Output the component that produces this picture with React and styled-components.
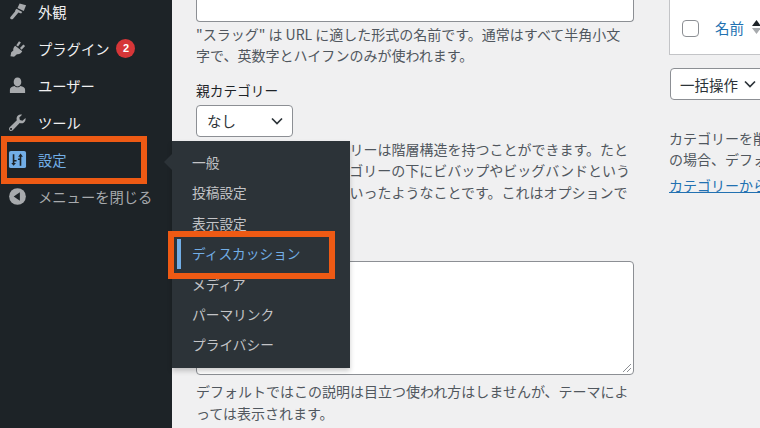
import React from "react";
import styled, { createGlobalStyle } from "styled-components";

const Global = createGlobalStyle`
  html, body { margin: 0; padding: 0; height: 100%; overflow: hidden; background: #f0f0f1; }
  * { box-sizing: border-box; }
`;
const Page = styled.div`
  width: 760px; height: 428px; overflow: hidden; position: relative;
  display: flex; background: #f0f0f1;
  font-family: "Noto Sans CJK JP", "Noto Sans", sans-serif; color: #50575e;
`;
const Sidebar = styled.nav`
  width: 172px; flex: none; background: #1d2327; overflow: hidden;
`;
const Menu = styled.ul`
  list-style: none; margin: -7px 0 0; padding: 0;
`;
const Item = styled.li`
  height: 37px; display: flex; align-items: center; padding-left: 8px; gap: 11px;
  font-size: 14.3px; color: ${p => p.$color || "#f0f0f1"};
`;
const IconBox = styled.span`
  width: 19px; height: 19px; flex: none; display: flex; color: ${p => p.$color || "#a7aaad"};
  svg { width: 100%; height: 100%; display: block; }
`;
const Badge = styled.span`
  width: 19px; height: 19px; border-radius: 50%; background: #d63638; color: #fff;
  font: 700 11px/19px "Liberation Sans", sans-serif; text-align: center; margin-left: -4px;
`;
const Main = styled.main`
  flex: 1; display: flex; min-width: 0; padding-left: 24px;
`;
const FormCol = styled.div`
  width: 438px; flex: none; display: flex; flex-direction: column;
`;
const TopInput = styled.div`
  height: 22px; flex: none; background: #fff; border: 1px solid #8c8f94; border-top: 0; border-radius: 0 0 4px 4px;
`;
const Help = styled.p`
  margin: ${p => p.$mt || 0}px 0 0; font-size: 14px; line-height: 21.4px; color: #50575e; white-space: nowrap;
`;
const Label = styled.div`
  margin-top: ${p => p.$mt}px; font-size: 13.7px; line-height: 21px; color: #1d2327;
`;
const SelectBox = styled.div`
  margin-top: ${p => p.$mt || 0}px; margin-left: ${p => p.$ml || 0}px; height: 32px; border: 1px solid #8c8f94; border-radius: 4px; background: #fff;
  display: flex; align-items: center; justify-content: space-between; color: #2c3338; font-size: 14.5px;
  width: ${p => p.$w}px; padding: 0 ${p => p.$pr}px 0 ${p => p.$pl}px; flex: none; white-space: nowrap;
`;
const Chevron = styled.svg`
  width: 14px; height: 14px; flex: none;
`;
const TextArea = styled.div`
  margin-top: 6px; height: 114px; flex: none; background: #fff; border: 1px solid #8c8f94; border-radius: 4px; position: relative;
`;
const Grip = styled.svg`
  position: absolute; right: 1px; bottom: 1px; width: 10px; height: 10px;
`;
const SideCol = styled.div`
  margin-left: 35px; flex: none; width: 200px; display: flex; flex-direction: column;
`;
const TableHead = styled.div`
  height: 55px; flex: none; background: #fff; border: 1px solid #c3c4c7; border-top: 0; border-right: 0;
  display: flex; align-items: center; padding: 0 0 0 12px; gap: 16px;
`;
const Check = styled.span`
  width: 17px; height: 17px; border: 1px solid #8c8f94; border-radius: 4px; background: #fff; flex: none; margin-top: 2px;
`;
const NameLink = styled.span`
  display: flex; align-items: center; gap: 8px; color: #2271b1; font-size: 14.5px;
`;
const Sort = styled.svg`
  width: 9px; height: 16px; flex: none;
`;
const Note = styled.p`
  margin: ${p => p.$mt || 0}px 0 0 0; font-size: 14px; line-height: 21.4px; white-space: nowrap; color: #50575e;
`;
const NoteLink = styled.a`
  color: #2271b1; text-decoration: underline;
`;
const Flyout = styled.ul`
  position: absolute; left: 172px; top: 141px; width: 178px; height: 227px; margin: 0; padding: 6px 0 0;
  list-style: none; background: #2c3338; box-shadow: 0 3px 5px rgba(0,0,0,.2);
  &::before {
    content: ""; position: absolute; left: -8px; top: 13px;
    border: 8px solid transparent; border-left: 0; border-right-color: #2c3338;
  }
`;
const FlyItem = styled.li`
  height: 30.4px; line-height: 30px; padding-left: 20px; font-size: 13.7px; position: relative;
  color: ${p => p.$active ? "#72aee6" : "#c3c4c7"};
  ${p => p.$active ? `&::before { content: ""; position: absolute; left: 5px; top: 1px; width: 4px; height: 30px; background: #72aee6; }` : ""}
`;
const Highlight = styled.div`
  position: absolute; left: ${p => p.$x}px; top: ${p => p.$y}px; width: ${p => p.$w}px; height: ${p => p.$h}px;
  border: 6px solid #ee5a14; pointer-events: none;
`;

const Brush = () => (
  <svg viewBox="0 0 20 20" fill="currentColor"><path d="M12.2 1.6 L19 3.4 L16.6 9.6 L10 6.4 Z" /><path d="M9 7.2 L15 10.4 L13.8 12 L11 11 L5.2 17.8 C4 19 1.6 17.6 2.4 16 L7.4 10 L7.8 8.4 Z" /></svg>
);
const Plug = () => (
  <svg viewBox="0 0 20 20" fill="currentColor"><path d="M11.6 2.4 L13.6 3.8 L10.6 8 L8.7 6.6 Z" /><path d="M16.2 5.8 L18 7.4 L14.3 11.2 L12.6 9.6 Z" /><path d="M7.6 7 L15 13 C13.8 15.4 11.6 16.4 9.4 16 L6.4 18.6 L2.6 18.2 L3.4 14 L5.6 12 C5.2 10.4 6 8.4 7.6 7 Z" /></svg>
);
const User = () => (
  <svg viewBox="0 0 20 20" fill="currentColor"><path d="M10 1.5 C12.6 1.5 14 3.6 14 6.4 C14 9 12.6 11 10 11 C7.4 11 6 9 6 6.4 C6 3.6 7.4 1.5 10 1.5 Z" /><path d="M7 10.6 C8 12.4 12 12.4 13 10.6 C15.8 11.2 18 12.4 18 14.4 V18 H2 V14.4 C2 12.4 4.2 11.2 7 10.6 Z" /></svg>
);
const Wrench = () => (
  <svg viewBox="0 0 20 20" fill="currentColor"><path fillRule="evenodd" d="M18.4 5.2 C18.8 7 18.2 8.8 16.8 9.9 C15.5 10.9 13.8 11.1 12.3 10.5 L5 18.2 C4 19.2 2.6 19.2 1.7 18.3 C0.8 17.4 0.9 16 1.8 15.1 L9.3 7.6 C8.7 6 9 4.2 10.2 2.9 C11.4 1.7 13.2 1.3 14.8 1.8 L11.9 4.7 L12.5 7.4 L15.2 8.1 Z M3.2 15.9 a1 1 0 1 0 0.01 0 Z" /></svg>
);
const Settings = () => (
  <svg viewBox="0 0 20 20"><rect x="1" y="1" width="18" height="18" rx="2" fill="#72aee6" /><path d="M5 4.5 h1.7 v6 H9 v1.6 H6.7 v1.6 l1.7 0 l-2.5 3 l-2.5 -3 h1.6 Z M14 16.5 h-1.7 v-6 H10.5 V9 h1.8 V7 h-1.6 l2.5 -3.2 l2.5 3.2 H14 Z" fill="#1d2327" /></svg>
);
const Collapse = () => (
  <svg viewBox="0 0 20 20"><circle cx="10" cy="10" r="8.8" fill="currentColor" /><path d="M12.5 5.5 V14.5 L6 10 Z" fill="#1d2327" /></svg>
);
const ChevronDown = () => (
  <Chevron viewBox="0 0 14 14" fill="none" stroke="#2c3338" strokeWidth="1.7"><path d="M2 4.5 L7 9.5 L12 4.5" /></Chevron>
);

export default function App() {
  return (
    <Page>
      <Global />
      <Sidebar>
        <Menu>
          <Item><IconBox><Brush /></IconBox>外観</Item>
          <Item><IconBox><Plug /></IconBox>プラグイン <Badge>2</Badge></Item>
          <Item><IconBox><User /></IconBox>ユーザー</Item>
          <Item><IconBox><Wrench /></IconBox>ツール</Item>
          <Item $color="#72aee6"><IconBox $color="#72aee6"><Settings /></IconBox>設定</Item>
          <Item $color="#a7aaad"><IconBox><Collapse /></IconBox>メニューを閉じる</Item>
        </Menu>
      </Sidebar>
      <Main>
        <FormCol>
          <TopInput />
          <Help $mt={2}>"スラッグ" は URL に適した形式の名前です。通常はすべて半角小文<br />字で、英数字とハイフンのみが使われます。</Help>
          <Label $mt={13}>親カテゴリー</Label>
          <SelectBox $w={97} $pl={10} $pr={8} $mt={4}>なし<ChevronDown /></SelectBox>
          <Help $mt={2}>タグとは異なり、カテゴリーは階層構造を持つことができます。たと<br />えば、ジャズというカテゴリーの下にビバップやビッグバンドという<br />子カテゴリーを持つ、といったようなことです。これはオプションで<br />す。</Help>
          <Label $mt={10}>説明</Label>
          <TextArea>
            <Grip viewBox="0 0 10 10" stroke="#8c8f94" strokeWidth="1"><path d="M1 9 L9 1 M5 9 L9 5" /></Grip>
          </TextArea>
          <Help $mt={6}>デフォルトではこの説明は目立つ使われ方はしませんが、テーマによ<br />っては表示されます。</Help>
        </FormCol>
        <SideCol>
          <TableHead>
            <Check />
            <NameLink>名前
              <Sort viewBox="0 0 9 16"><path d="M4.5 1 L9 7 H0 Z" fill="#1d2327" /><path d="M4.5 15 L9 9 H0 Z" fill="#a7aaad" /></Sort>
            </NameLink>
          </TableHead>
          <SelectBox $w={100} $pl={9} $pr={12} $mt={13} $ml={1}>一括操作<ChevronDown /></SelectBox>
          <Note $mt={28}>カテゴリーを削除すると、<br />の場合、デフォルト</Note>
          <Note $mt={4}><NoteLink>カテゴリーからタグへ</NoteLink></Note>
        </SideCol>
      </Main>
      <Flyout>
        <FlyItem>一般</FlyItem>
        <FlyItem>投稿設定</FlyItem>
        <FlyItem>表示設定</FlyItem>
        <FlyItem $active>ディスカッション</FlyItem>
        <FlyItem>メディア</FlyItem>
        <FlyItem>パーマリンク</FlyItem>
        <FlyItem>プライバシー</FlyItem>
      </Flyout>
      <Highlight $x={1} $y={136} $w={146} $h={48} />
      <Highlight $x={168} $y={231} $w={167} $h={48} />
    </Page>
  );
}
